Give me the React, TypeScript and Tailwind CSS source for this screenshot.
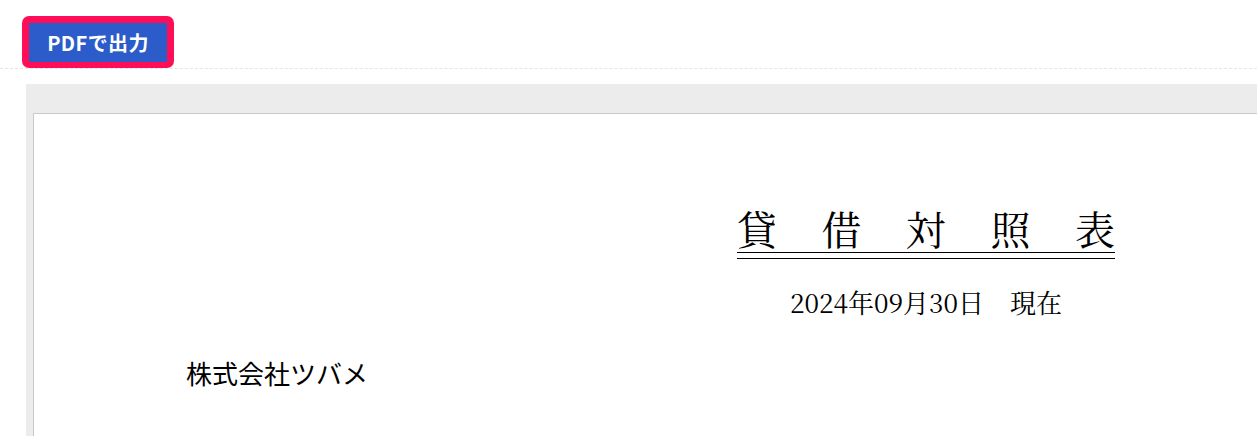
import React from 'react';

const titleChars = ['貸', '借', '対', '照', '表'];

export default function App() {
  return (
    <div className="min-h-screen w-full overflow-hidden bg-white">
      {/* Toolbar */}
      <div className="border-b border-dashed border-[#e6e6e6] pl-[22px] pt-4">
        <div className="inline-flex rounded-[7px] bg-[#ff0e58] p-[7px] pb-[6px] align-top">
          <button
            type="button"
            className="flex h-[39px] w-[138px] items-center justify-center rounded-[1px] bg-[#2b5cc9] text-[20px] font-bold tracking-[0.02em] text-white"
            style={{ fontFamily: '"Noto Sans CJK JP", "Liberation Sans", sans-serif' }}
          >
            PDFで出力
          </button>
        </div>
      </div>

      {/* Preview area */}
      <div className="ml-[26px] mt-[15px] w-[1900px] bg-[#ececec] pl-[7px] pt-[29px]">
        <div className="h-[800px] w-[1786px] border border-[#c9c9c9] bg-white pt-[92px]">
          {/* Title */}
          <div
            className="text-black"
            style={{ fontFamily: '"Noto Serif CJK JP", "Liberation Serif", serif' }}
          >
            <div className="mx-auto w-[378px]">
              <div className="border-b border-black pb-[2px]">
                <div className="flex justify-between text-[40px] leading-[44px]">
                  {titleChars.map((c) => (
                    <span key={c}>{c}</span>
                  ))}
                </div>
              </div>
              <div className="h-[6px] border-b border-black" />
            </div>

            <p className="mt-[28px] text-center text-[26px] leading-[30px]">
              2024年09月30日　現在
            </p>
          </div>

          {/* Company */}
          <p
            className="mt-[41px] pl-[152px] text-[26px] leading-[30px] text-black"
            style={{ fontFamily: '"Noto Sans CJK JP", sans-serif' }}
          >
            株式会社ツバメ
          </p>
        </div>
      </div>
    </div>
  );
}
